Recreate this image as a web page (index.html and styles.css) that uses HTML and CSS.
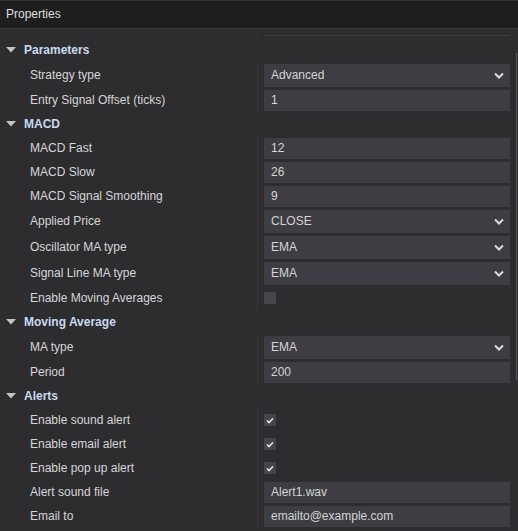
FILE: index.html
```html
<!DOCTYPE html>
<html lang="en">
  <head>
    <meta charset="UTF-8" />
    <meta name="viewport" content="width=device-width, initial-scale=1.0" />
    <title>Properties</title>
    <link rel="stylesheet" href="styles.css">
  </head>
  <body>
    <div class="panel">
      <div class="titlebar">Properties</div>
      <div class="grid">
        <div class="row top">
          <div class="label"></div>
          <div class="value"><div class="topline"></div></div>
        </div>

        <div class="group">
          <div class="group-head">
            <svg class="caret" width="10" height="6" viewBox="0 0 10 6"><polygon points="0,0 10,0 5,5.5" /></svg>
            Parameters
          </div>
          <div class="row sel">
            <div class="label">Strategy type</div>
            <div class="value"><div class="field">Advanced<svg class="chev" width="10" height="7" viewBox="0 0 10 7"><polyline points="1,1.5 5,5.5 9,1.5" /></svg></div></div>
          </div>
          <div class="row">
            <div class="label">Entry Signal Offset (ticks)</div>
            <div class="value"><div class="field">1</div></div>
          </div>
        </div>

        <div class="group">
          <div class="group-head">
            <svg class="caret" width="10" height="6" viewBox="0 0 10 6"><polygon points="0,0 10,0 5,5.5" /></svg>
            MACD
          </div>
          <div class="row">
            <div class="label">MACD Fast</div>
            <div class="value"><div class="field">12</div></div>
          </div>
          <div class="row">
            <div class="label">MACD Slow</div>
            <div class="value"><div class="field">26</div></div>
          </div>
          <div class="row">
            <div class="label">MACD Signal Smoothing</div>
            <div class="value"><div class="field">9</div></div>
          </div>
          <div class="row sel">
            <div class="label">Applied Price</div>
            <div class="value"><div class="field">CLOSE<svg class="chev" width="10" height="7" viewBox="0 0 10 7"><polyline points="1,1.5 5,5.5 9,1.5" /></svg></div></div>
          </div>
          <div class="row sel">
            <div class="label">Oscillator MA type</div>
            <div class="value"><div class="field">EMA<svg class="chev" width="10" height="7" viewBox="0 0 10 7"><polyline points="1,1.5 5,5.5 9,1.5" /></svg></div></div>
          </div>
          <div class="row sel">
            <div class="label">Signal Line MA type</div>
            <div class="value"><div class="field">EMA<svg class="chev" width="10" height="7" viewBox="0 0 10 7"><polyline points="1,1.5 5,5.5 9,1.5" /></svg></div></div>
          </div>
          <div class="row">
            <div class="label">Enable Moving Averages</div>
            <div class="value"><div class="check"></div></div>
          </div>
        </div>

        <div class="group">
          <div class="group-head">
            <svg class="caret" width="10" height="6" viewBox="0 0 10 6"><polygon points="0,0 10,0 5,5.5" /></svg>
            Moving Average
          </div>
          <div class="row sel">
            <div class="label">MA type</div>
            <div class="value"><div class="field">EMA<svg class="chev" width="10" height="7" viewBox="0 0 10 7"><polyline points="1,1.5 5,5.5 9,1.5" /></svg></div></div>
          </div>
          <div class="row">
            <div class="label">Period</div>
            <div class="value"><div class="field">200</div></div>
          </div>
        </div>

        <div class="group">
          <div class="group-head">
            <svg class="caret" width="10" height="6" viewBox="0 0 10 6"><polygon points="0,0 10,0 5,5.5" /></svg>
            Alerts
          </div>
          <div class="row">
            <div class="label">Enable sound alert</div>
            <div class="value"><div class="check"><svg width="8" height="7" viewBox="0 0 8 7"><polyline points="1,3.5 3,5.5 7,1.5" /></svg></div></div>
          </div>
          <div class="row">
            <div class="label">Enable email alert</div>
            <div class="value"><div class="check"><svg width="8" height="7" viewBox="0 0 8 7"><polyline points="1,3.5 3,5.5 7,1.5" /></svg></div></div>
          </div>
          <div class="row">
            <div class="label">Enable pop up alert</div>
            <div class="value"><div class="check"><svg width="8" height="7" viewBox="0 0 8 7"><polyline points="1,3.5 3,5.5 7,1.5" /></svg></div></div>
          </div>
          <div class="row">
            <div class="label">Alert sound file</div>
            <div class="value"><div class="field">Alert1.wav</div></div>
          </div>
          <div class="row">
            <div class="label">Email to</div>
            <div class="value"><div class="field">emailto@example.com</div></div>
          </div>
        </div>
      </div>
      <div class="scroll-thumb"></div>
    </div>
  </body>
</html>
```

FILE: styles.css
```css
*{
    margin: 0;
    padding: 0;
    box-sizing: border-box;
}
body{
    background-color: #2d2d30;
    font-family: "Liberation Sans", Arial, sans-serif;
    font-size: 12px;
    color: #d6d6d6;
}
.panel{
    position: relative;
    width: 518px;
    height: 531px;
    overflow: hidden;
}
.titlebar{
    height: 29px;
    background-color: #1e1e1e;
    border-top: 1px solid #333336;
    border-bottom: 1px solid #3a3a3d;
    padding-left: 6px;
    line-height: 27px;
    font-size: 12px;
    color: #dedede;
}
.row{
    display: flex;
    height: 24px;
    align-items: center;
}
.row.sel{
    height: 26px;
}
.row.top{
    height: 9px;
    align-items: flex-start;
}
.label{
    width: 258px;
    height: 100%;
    flex-shrink: 0;
    padding-left: 30px;
    display: flex;
    align-items: center;
    border-right: 1px solid #3a3a3e;
    white-space: nowrap;
}
.row.top .label{
    height: 4px;
    margin-top: 4px;
}
.value{
    padding-left: 6px;
    display: flex;
    align-items: center;
}
.topline{
    width: 246px;
    height: 1px;
    margin-top: 6px;
    background-color: #3e3e42;
}
.group-head{
    height: 24px;
    display: flex;
    align-items: center;
    padding-left: 6px;
    font-weight: bold;
    color: #c9d9ee;
}
.caret{
    fill: #c4c4c4;
    margin-right: 8px;
}
.field{
    width: 246px;
    height: 21px;
    background-color: #3e3d43;
    padding-left: 7px;
    padding-right: 6px;
    display: flex;
    align-items: center;
    justify-content: space-between;
    color: #d4d4d4;
}
.row.sel .field{
    height: 23px;
}
.chev{
    fill: none;
    stroke: #dcdcdc;
    stroke-width: 2;
}
.check{
    width: 12px;
    height: 12px;
    background-color: #46454b;
    display: flex;
    align-items: center;
    justify-content: center;
}
.check svg{
    fill: none;
    stroke: #e6e6e6;
    stroke-width: 1.6;
}
.scroll-thumb{
    position: absolute;
    right: 1px;
    top: 53px;
    width: 1px;
    height: 327px;
    background-color: #56565a;
}
```
